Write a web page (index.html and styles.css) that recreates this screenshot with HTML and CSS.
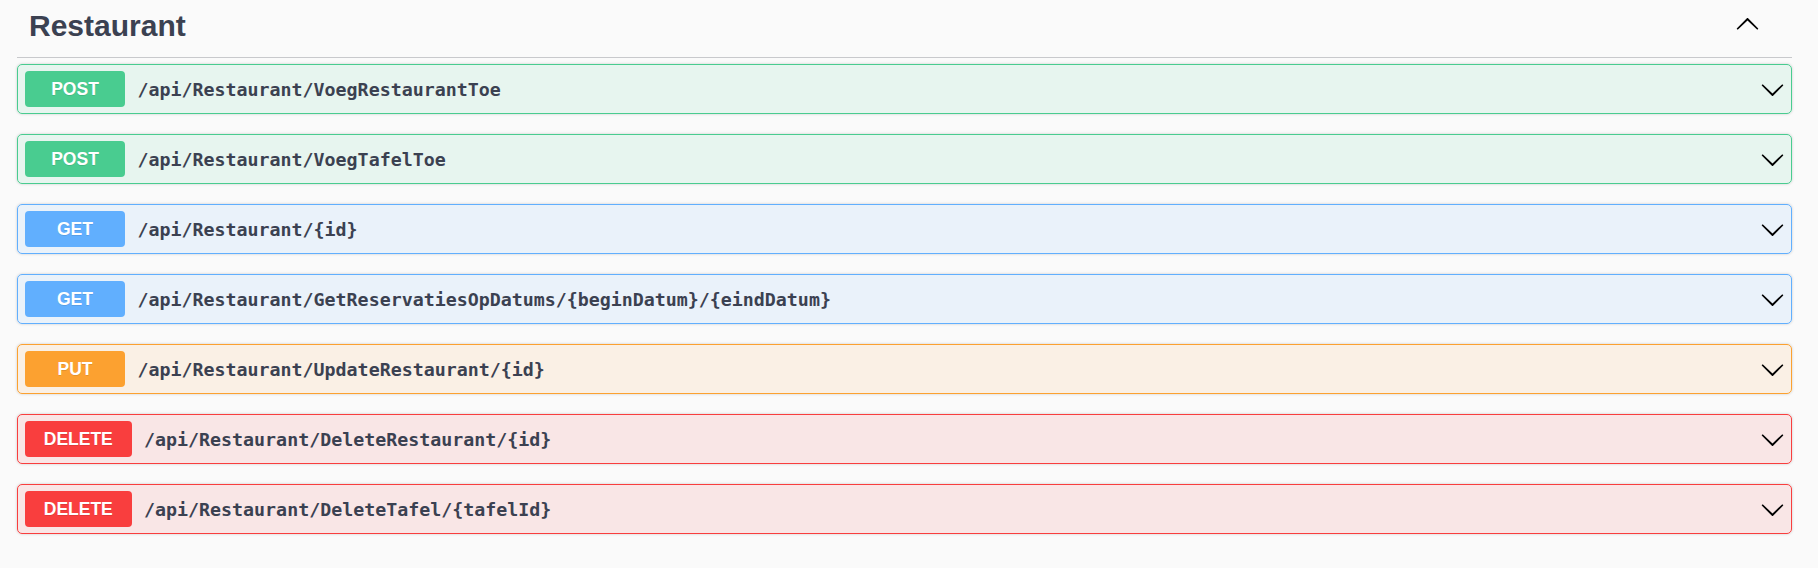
FILE: index.html
```html
<!DOCTYPE html>
<html>
<head>
<meta charset="utf-8">
<link rel="stylesheet" href="styles.css">
</head>
<body>
<div class="section">
  <h3 class="tag">
    <span class="tag-title">Restaurant</span>
    <button class="expand">
      <svg class="arrow up" viewBox="0 0 20 20" width="25" height="25"><path d="M17.418 6.109c.272-.268.709-.268.979 0s.271.701 0 .969l-7.908 7.83c-.27.268-.707.268-.979 0l-7.908-7.83c-.27-.268-.27-.701 0-.969.271-.268.709-.268.979 0L10 13.25l7.418-7.141z"/></svg>
    </button>
  </h3>
  <div class="ops">
    <div class="opblock post">
      <span class="method">POST</span>
      <span class="path">/api/Restaurant/VoegRestaurantToe</span>
      <svg class="arrow" viewBox="0 0 20 20" width="25" height="25"><path d="M17.418 6.109c.272-.268.709-.268.979 0s.271.701 0 .969l-7.908 7.83c-.27.268-.707.268-.979 0l-7.908-7.83c-.27-.268-.27-.701 0-.969.271-.268.709-.268.979 0L10 13.25l7.418-7.141z"/></svg>
    </div>
    <div class="opblock post">
      <span class="method">POST</span>
      <span class="path">/api/Restaurant/VoegTafelToe</span>
      <svg class="arrow" viewBox="0 0 20 20" width="25" height="25"><path d="M17.418 6.109c.272-.268.709-.268.979 0s.271.701 0 .969l-7.908 7.83c-.27.268-.707.268-.979 0l-7.908-7.83c-.27-.268-.27-.701 0-.969.271-.268.709-.268.979 0L10 13.25l7.418-7.141z"/></svg>
    </div>
    <div class="opblock get">
      <span class="method">GET</span>
      <span class="path">/api/Restaurant/{id}</span>
      <svg class="arrow" viewBox="0 0 20 20" width="25" height="25"><path d="M17.418 6.109c.272-.268.709-.268.979 0s.271.701 0 .969l-7.908 7.83c-.27.268-.707.268-.979 0l-7.908-7.83c-.27-.268-.27-.701 0-.969.271-.268.709-.268.979 0L10 13.25l7.418-7.141z"/></svg>
    </div>
    <div class="opblock get">
      <span class="method">GET</span>
      <span class="path">/api/Restaurant/GetReservatiesOpDatums/{beginDatum}/{eindDatum}</span>
      <svg class="arrow" viewBox="0 0 20 20" width="25" height="25"><path d="M17.418 6.109c.272-.268.709-.268.979 0s.271.701 0 .969l-7.908 7.83c-.27.268-.707.268-.979 0l-7.908-7.83c-.27-.268-.27-.701 0-.969.271-.268.709-.268.979 0L10 13.25l7.418-7.141z"/></svg>
    </div>
    <div class="opblock put">
      <span class="method">PUT</span>
      <span class="path">/api/Restaurant/UpdateRestaurant/{id}</span>
      <svg class="arrow" viewBox="0 0 20 20" width="25" height="25"><path d="M17.418 6.109c.272-.268.709-.268.979 0s.271.701 0 .969l-7.908 7.83c-.27.268-.707.268-.979 0l-7.908-7.83c-.27-.268-.27-.701 0-.969.271-.268.709-.268.979 0L10 13.25l7.418-7.141z"/></svg>
    </div>
    <div class="opblock delete">
      <span class="method">DELETE</span>
      <span class="path">/api/Restaurant/DeleteRestaurant/{id}</span>
      <svg class="arrow" viewBox="0 0 20 20" width="25" height="25"><path d="M17.418 6.109c.272-.268.709-.268.979 0s.271.701 0 .969l-7.908 7.83c-.27.268-.707.268-.979 0l-7.908-7.83c-.27-.268-.27-.701 0-.969.271-.268.709-.268.979 0L10 13.25l7.418-7.141z"/></svg>
    </div>
    <div class="opblock delete">
      <span class="method">DELETE</span>
      <span class="path">/api/Restaurant/DeleteTafel/{tafelId}</span>
      <svg class="arrow" viewBox="0 0 20 20" width="25" height="25"><path d="M17.418 6.109c.272-.268.709-.268.979 0s.271.701 0 .969l-7.908 7.83c-.27.268-.707.268-.979 0l-7.908-7.83c-.27-.268-.27-.701 0-.969.271-.268.709-.268.979 0L10 13.25l7.418-7.141z"/></svg>
    </div>
  </div>
</div>
</body>
</html>
```
FILE: styles.css
```css
html, body {
  margin: 0;
  padding: 0;
  background: #fafafa;
}
.section {
  margin-left: 17px;
  width: 1775px;
}
.tag {
  display: flex;
  align-items: flex-start;
  box-sizing: border-box;
  height: 58px;
  margin: 0 0 6px 0;
  padding: 9px 32px 14px 12px;
  border-bottom: 1px solid #c8c9cc;
  font-family: "Liberation Sans", Arial, sans-serif;
  font-size: 30px;
  font-weight: 700;
  line-height: 34px;
  color: #3b4151;
}
.tag-title {
  flex: 1;
}
.expand {
  border: none;
  background: none;
  padding: 0;
  margin: 3px 0 0 0;
  width: 25px;
  height: 25px;
  display: block;
}
.arrow {
  display: block;
  flex: none;
  fill: #000;
}
.arrow.up {
  transform: rotate(180deg);
}
.opblock {
  display: flex;
  align-items: center;
  height: 50px;
  box-sizing: border-box;
  margin-bottom: 20px;
  padding: 0 6px 0 7px;
  border: 1px solid #000;
  border-radius: 5px;
  box-shadow: 0 0 3px rgba(0, 0, 0, 0.19);
}
.method {
  box-sizing: border-box;
  min-width: 100px;
  padding: 7.5px 18.75px;
  border-radius: 4px;
  font-family: "Liberation Sans", Arial, sans-serif;
  font-size: 17.5px;
  font-weight: 700;
  line-height: 21px;
  color: #fff;
  text-align: center;
  text-shadow: 0 1px 0 rgba(0, 0, 0, 0.1);
}
.path {
  flex: 1;
  padding: 0 12.5px;
  font-family: "DejaVu Sans Mono", "Liberation Mono", monospace;
  font-size: 18.3px;
  font-weight: 700;
  color: #3b4151;
}
.post { border-color: #49cc90; background: rgba(73, 204, 144, 0.1); }
.post .method { background: #49cc90; }
.get { border-color: #61affe; background: rgba(97, 175, 254, 0.1); }
.get .method { background: #61affe; }
.put { border-color: #fca130; background: rgba(252, 161, 48, 0.1); }
.put .method { background: #fca130; }
.delete { border-color: #f93e3e; background: rgba(249, 62, 62, 0.1); }
.delete .method { background: #f93e3e; }
```
